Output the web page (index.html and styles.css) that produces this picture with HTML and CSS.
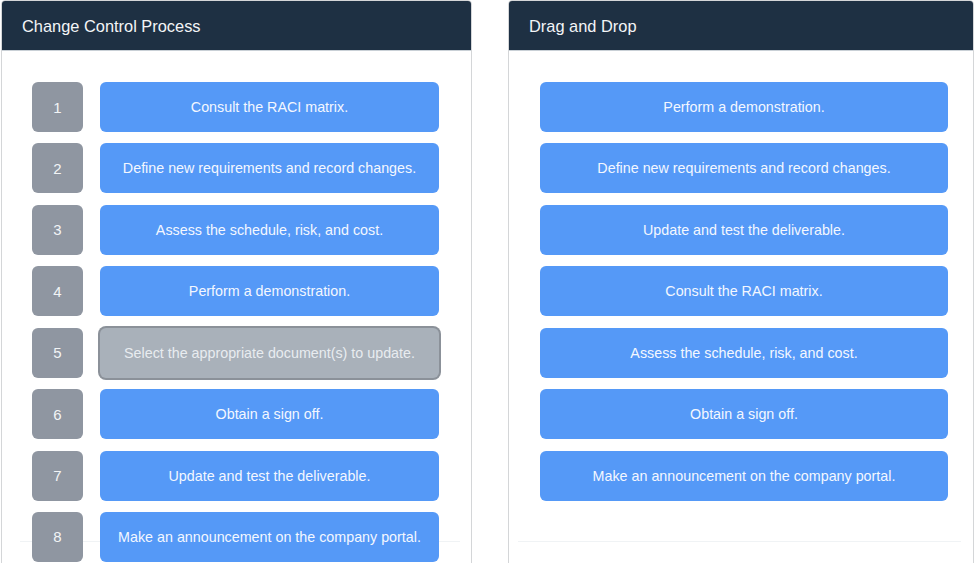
FILE: index.html
```html
<!DOCTYPE html>
<html lang="en">
<head>
<meta charset="utf-8">
<title>Change Control Process</title>
<link rel="stylesheet" href="styles.css">
</head>
<body>
<div class="page">
  <section class="panel panel-left">
    <header class="panel-header">Change Control Process</header>
    <div class="list list-left">
      <div class="row"><div class="num">1</div><div class="item">Consult the RACI matrix.</div></div>
      <div class="row"><div class="num">2</div><div class="item">Define new requirements and record changes.</div></div>
      <div class="row"><div class="num">3</div><div class="item">Assess the schedule, risk, and cost.</div></div>
      <div class="row"><div class="num">4</div><div class="item">Perform a demonstration.</div></div>
      <div class="row"><div class="num">5</div><div class="item item-selected">Select the appropriate document(s) to update.</div></div>
      <div class="row"><div class="num">6</div><div class="item">Obtain a sign off.</div></div>
      <div class="row"><div class="num">7</div><div class="item">Update and test the deliverable.</div></div>
      <div class="row"><div class="num">8</div><div class="item">Make an announcement on the company portal.</div></div>
    </div>
  </section>
  <section class="panel panel-right">
    <header class="panel-header">Drag and Drop</header>
    <div class="list list-right">
      <div class="item">Perform a demonstration.</div>
      <div class="item">Define new requirements and record changes.</div>
      <div class="item">Update and test the deliverable.</div>
      <div class="item">Consult the RACI matrix.</div>
      <div class="item">Assess the schedule, risk, and cost.</div>
      <div class="item">Obtain a sign off.</div>
      <div class="item">Make an announcement on the company portal.</div>
    </div>
  </section>
</div>
</body>
</html>
```
FILE: styles.css
```css
html, body {
  margin: 0;
  padding: 0;
  background: #ffffff;
  overflow: hidden;
}
body {
  font-family: "Liberation Sans", Arial, Helvetica, sans-serif;
  width: 974px;
  height: 563px;
}
.page {
  display: flex;
  align-items: flex-start;
  padding-left: 1px;
  gap: 36px;
}
.panel {
  box-sizing: border-box;
  height: 620px;
  border: 1px solid #d4d6d8;
  border-radius: 4px;
  background: #ffffff;
  overflow: hidden;
}
.panel-left { width: 471px; }
.panel-right { width: 466px; }
.panel-header {
  height: 50px;
  display: flex;
  align-items: center;
  padding-left: 20px;
  padding-top: 1px;
  background: #1e3043;
  color: #f3f5f7;
  font-size: 16.4px;
  border-bottom: 1px solid #c9d0d6;
  box-sizing: border-box;
}
.list {
  box-sizing: border-box;
  height: 479px;
  margin-top: 12px;
  padding-top: 19px;
  border-bottom: 1px solid #f0f3f5;
  display: flex;
  flex-direction: column;
  gap: 11.43px;
}
.list-left {
  width: 440px;
  margin-left: 18px;
  padding-left: 12px;
  padding-right: 21px;
}
.list-right {
  width: 443px;
  margin-left: 9px;
  padding-left: 22px;
  padding-right: 13px;
}
.row {
  display: flex;
  gap: 17px;
  height: 50px;
  flex: none;
}
.num {
  width: 51px;
  height: 50px;
  flex: none;
  border-radius: 6px;
  background: #8f96a1;
  color: #f2f4f6;
  font-size: 15px;
  display: flex;
  align-items: center;
  justify-content: center;
}
.item {
  height: 50px;
  flex: 1 0 auto;
  box-sizing: border-box;
  border-radius: 6px;
  background: #5599f7;
  color: #f3f7ff;
  font-size: 14.3px;
  display: flex;
  align-items: center;
  justify-content: center;
  text-align: center;
}
.list-right .item {
  flex: none;
}
.item-selected {
  background: #a9b1ba;
  color: #e8ecf0;
  box-shadow: 0 0 0 2px #8b9199;
}
```
